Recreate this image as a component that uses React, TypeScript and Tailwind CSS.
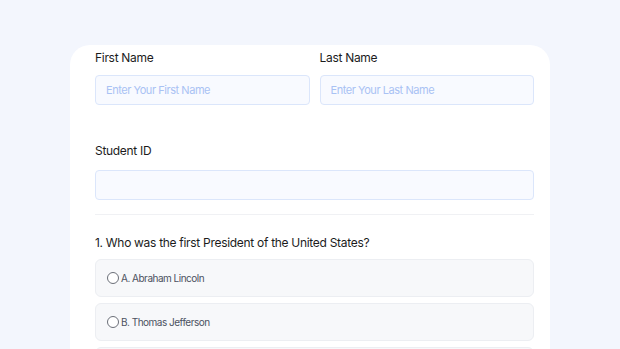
import React from "react";

const options = ["A. Abraham Lincoln", "B. Thomas Jefferson", "C. George Washington"];

export default function App() {
  return (
    <div className="w-full h-[349px] overflow-hidden bg-[#f3f6fd] font-['Inter',sans-serif] text-[#1c1c1c]">
      <div className="ml-[70px] mt-[45px] w-[480px] h-[400px] bg-white rounded-t-[20px] pl-[25px] pr-[16px] pt-[5px]">
        <div className="grid grid-cols-2 gap-[10px]">
          <div className="flex flex-col">
            <label className="text-[12px] tracking-[-0.3px] leading-[16px] mb-[9px]">First Name</label>
            <input
              placeholder="Enter Your First Name"
              className="h-[30px] rounded-[4px] border border-[#dbe6fb] bg-[#f8faff] px-[10px] text-[11px] tracking-[-0.45px] placeholder:text-[#a9c2f4] outline-none"
            />
          </div>
          <div className="flex flex-col">
            <label className="text-[12px] tracking-[-0.3px] leading-[16px] mb-[9px]">Last Name</label>
            <input
              placeholder="Enter Your Last Name"
              className="h-[30px] rounded-[4px] border border-[#dbe6fb] bg-[#f8faff] px-[10px] text-[11px] tracking-[-0.45px] placeholder:text-[#a9c2f4] outline-none"
            />
          </div>
        </div>

        <div className="flex flex-col mt-[38px]">
          <label className="text-[12px] tracking-[-0.3px] leading-[16px] mb-[11px]">Student ID</label>
          <input className="h-[30px] rounded-[4px] border border-[#dbe6fb] bg-[#f8faff] px-[10px] text-[11px] outline-none" />
        </div>

        <div className="mt-[14px] border-t border-[#f0f1f4]" />

        <p className="mt-[20px] text-[12px] tracking-[-0.3px] leading-[16px]">
          1. Who was the first President of the United States?
        </p>

        <div className="mt-[8px] flex flex-col gap-[6px]">
          {options.map((o) => (
            <label
              key={o}
              className="h-[38px] flex items-center gap-[2px] px-[11px] rounded-[6px] border border-[#eceef2] bg-[#f7f8fa] text-[10px] tracking-[-0.5px] text-[#4b5160]"
            >
              <span className="w-[12px] h-[12px] rounded-full border border-[#6b6f78] bg-white" />
              <span>{o}</span>
            </label>
          ))}
        </div>
      </div>
    </div>
  );
}
